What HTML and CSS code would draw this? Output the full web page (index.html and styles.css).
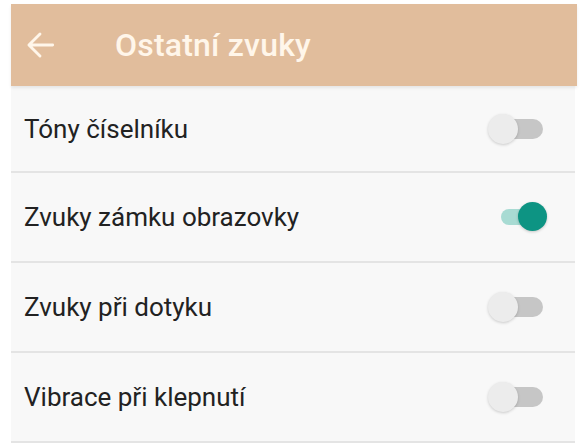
FILE: index.html
```html
<!DOCTYPE html>
<html lang="cs">
<head>
<meta charset="utf-8">
<link rel="stylesheet" href="styles.css">
</head>
<body>
<div class="screen">
  <header class="appbar">
    <svg class="back" viewBox="0 0 24 24" width="38" height="38" aria-hidden="true">
      <path d="M20 12H5.5M12 5l-7 7 7 7" fill="none" stroke="#fff6ea" stroke-width="1.8" stroke-linecap="round" stroke-linejoin="round"/>
    </svg>
    <h1 class="title">Ostatní zvuky</h1>
  </header>
  <ul class="list">
    <li class="row row-first"><span class="label">Tóny číselníku</span><span class="switch"><span class="track"></span><span class="thumb"></span></span></li>
    <li class="row"><span class="label">Zvuky zámku obrazovky</span><span class="switch on"><span class="track"></span><span class="thumb"></span></span></li>
    <li class="row"><span class="label">Zvuky při dotyku</span><span class="switch"><span class="track"></span><span class="thumb"></span></span></li>
    <li class="row"><span class="label">Vibrace při klepnutí</span><span class="switch"><span class="track"></span><span class="thumb"></span></span></li>
  </ul>
</div>
</body>
</html>
```
FILE: styles.css
```css
* { box-sizing: border-box; }
html, body {
  margin: 0;
  padding: 0;
  background: #ffffff;
  font-family: Roboto, "Noto Sans", "Liberation Sans", sans-serif;
}
.screen {
  width: 581px;
  height: 445px;
  padding: 4px 4px 0 11px;
  overflow: hidden;
}
.appbar {
  height: 82px;
  background: #e1bd9c;
  display: flex;
  align-items: center;
  padding-left: 10px;
  box-shadow: 0 2px 3px rgba(0,0,0,0.08);
  position: relative;
  z-index: 1;
}
.back {
  display: block;
  flex: none;
}
.title {
  margin: 0 0 0 56px;
  font-size: 32px;
  font-weight: 500;
  color: #fff6ea;
  letter-spacing: 0.2px;
}
.list {
  list-style: none;
  margin: 0;
  padding: 0;
  background: #f8f8f8;
  margin-right: 2px;
}
.row {
  height: 90px;
  display: flex;
  align-items: center;
  justify-content: space-between;
  padding: 0 32px 0 13px;
  border-bottom: 2px solid #e4e4e4;
}
.row-first { height: 87px; }
.label {
  font-size: 26px;
  color: #222222;
}
.switch {
  position: relative;
  width: 56px;
  height: 30px;
  flex: none;
}
.track {
  position: absolute;
  left: 14px;
  right: 0;
  top: 5px;
  height: 20px;
  border-radius: 10px;
  background: #c6c6c6;
}
.thumb {
  position: absolute;
  left: 1px;
  top: 0;
  width: 30px;
  height: 30px;
  border-radius: 50%;
  background: #ececec;
  box-shadow: 0 1px 3px rgba(0,0,0,0.18);
}
.switch.on .track {
  left: 14px;
  right: 12px;
  top: 7px;
  height: 16px;
  background: #a8dbd3;
}
.switch.on .thumb {
  left: auto;
  right: -4px;
  top: 0;
  width: 29px;
  height: 29px;
  background: #0d9483;
  box-shadow: 0 1px 3px rgba(0,0,0,0.2);
}
```
